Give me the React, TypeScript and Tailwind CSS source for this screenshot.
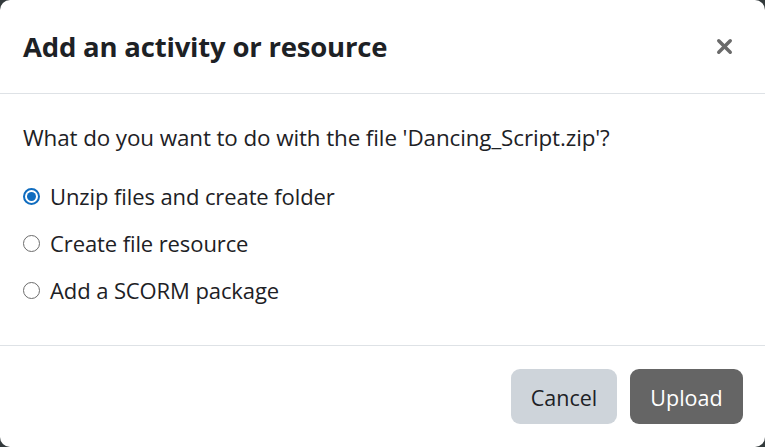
import { X } from 'lucide-react';

const options = [
  { label: 'Unzip files and create folder', checked: true },
  { label: 'Create file resource', checked: false },
  { label: 'Add a SCORM package', checked: false },
];

const App = () => {
  return (
    <div className="h-[447px] w-[765px] overflow-hidden bg-[#333a3c]" style={{ fontFamily: '"Open Sans", "Noto Sans", sans-serif' }}>
      <div className="flex h-full w-full flex-col rounded-[10px] bg-white text-[#1d2125]">
        {/* Header */}
        <div className="flex h-[94px] shrink-0 items-center justify-between border-b border-[#dee2e6] pl-[23px] pr-[29px]">
          <h1 className="text-[27.5px] font-bold tracking-[-0.2px]">Add an activity or resource</h1>
          <X className="h-[23px] w-[23px] text-[#6a6a6a]" strokeWidth={3.6} />
        </div>

        {/* Body */}
        <div className="flex flex-1 flex-col px-[23px] pt-[30px]">
          <p className="text-[22.4px] leading-[28px] tracking-[-0.1px]">What do you want to do with the file 'Dancing_Script.zip'?</p>
          <div className="mt-[30px] flex flex-col gap-[19px]">
            {options.map((o) => (
              <label key={o.label} className="flex items-center gap-[10px] text-[22px] leading-[28px] tracking-[-0.1px]">
                {o.checked ? (
                  <span className="flex h-[17px] w-[17px] items-center justify-center rounded-full border-[2px] border-[#0f6cbf]">
                    <span className="h-[9px] w-[9px] rounded-full bg-[#0f6cbf]" />
                  </span>
                ) : (
                  <span className="h-[17px] w-[17px] rounded-full border-[1.5px] border-[#6c6c6c]" />
                )}
                <span>{o.label}</span>
              </label>
            ))}
          </div>
        </div>

        {/* Footer */}
        <div className="flex h-[102px] shrink-0 items-center justify-end gap-[13px] border-t border-[#dee2e6] pr-[22px]">
          <button className="h-[55px] w-[106px] rounded-[9px] bg-[#ced4da] pt-[3px] text-[21.5px] text-[#1d2125]">Cancel</button>
          <button className="h-[55px] w-[113px] rounded-[9px] bg-[#656565] pt-[3px] text-[21.5px] text-white">Upload</button>
        </div>
      </div>
    </div>
  );
};

export default App;
